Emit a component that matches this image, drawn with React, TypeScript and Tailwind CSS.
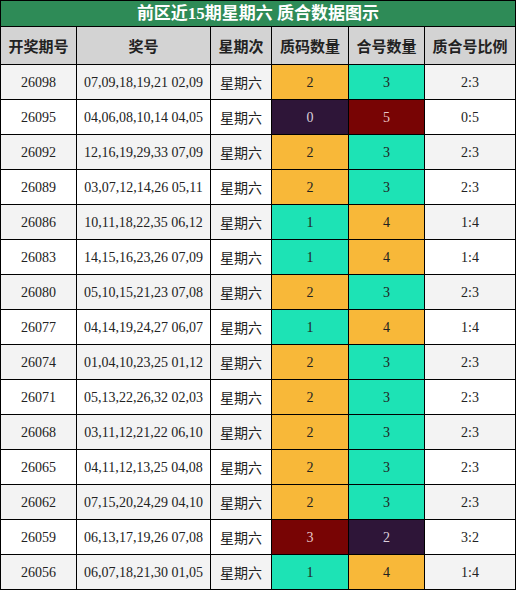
import React from "react";

type Row = { id: string; nums: string; p: number; c: number; ratio: string };

const rows: Row[] = [
  { id: "26098", nums: "07,09,18,19,21 02,09", p: 2, c: 3, ratio: "2:3" },
  { id: "26095", nums: "04,06,08,10,14 04,05", p: 0, c: 5, ratio: "0:5" },
  { id: "26092", nums: "12,16,19,29,33 07,09", p: 2, c: 3, ratio: "2:3" },
  { id: "26089", nums: "03,07,12,14,26 05,11", p: 2, c: 3, ratio: "2:3" },
  { id: "26086", nums: "10,11,18,22,35 06,12", p: 1, c: 4, ratio: "1:4" },
  { id: "26083", nums: "14,15,16,23,26 07,09", p: 1, c: 4, ratio: "1:4" },
  { id: "26080", nums: "05,10,15,21,23 07,08", p: 2, c: 3, ratio: "2:3" },
  { id: "26077", nums: "04,14,19,24,27 06,07", p: 1, c: 4, ratio: "1:4" },
  { id: "26074", nums: "01,04,10,23,25 01,12", p: 2, c: 3, ratio: "2:3" },
  { id: "26071", nums: "05,13,22,26,32 02,03", p: 2, c: 3, ratio: "2:3" },
  { id: "26068", nums: "03,11,12,21,22 06,10", p: 2, c: 3, ratio: "2:3" },
  { id: "26065", nums: "04,11,12,13,25 04,08", p: 2, c: 3, ratio: "2:3" },
  { id: "26062", nums: "07,15,20,24,29 04,10", p: 2, c: 3, ratio: "2:3" },
  { id: "26059", nums: "06,13,17,19,26 07,08", p: 3, c: 2, ratio: "3:2" },
  { id: "26056", nums: "06,07,18,21,30 01,05", p: 1, c: 4, ratio: "1:4" },
];

const ORANGE = "bg-[#f8b839] text-[#222222]";
const TEAL = "bg-[#1de3b5] text-[#222222]";
const PURPLE = "bg-[#2e1538] text-[#dcd0dc]";
const RED = "bg-[#780404] text-[#e8c8c8]";

const primeCls = (v: number) =>
  v === 2 ? ORANGE : v === 1 ? TEAL : v === 0 ? PURPLE : RED;
const compCls = (v: number) =>
  v === 3 ? TEAL : v === 4 ? ORANGE : v === 5 ? RED : PURPLE;

const headers = ["开奖期号", "奖号", "星期次", "质码数量", "合号数量", "质合号比例"];

export default function App() {
  return (
    <div
      className="w-[516px] h-[590px] bg-black p-px grid gap-px grid-cols-[75px_133px_60px_76px_75px_90px] grid-rows-[25px_37px_repeat(15,34px)] text-[#222222]"
      style={{ fontFamily: '"Liberation Serif", "Noto Sans CJK SC", serif' }}
    >
      <div className="col-span-6 bg-[#2e8b57] text-white font-bold text-[17px] flex items-center justify-center leading-none">
        前区近15期星期六 质合数据图示
      </div>
      {headers.map((h) => (
        <div
          key={h}
          className="bg-[#d3d3d3] font-bold text-[15px] flex items-center justify-center pt-[3px] text-[#222222]"
        >
          {h}
        </div>
      ))}
      {rows.map((r, i) => {
        const bg = i % 2 === 0 ? "bg-[#f3f3f3]" : "bg-white";
        return (
          <React.Fragment key={r.id}>
            <div className={`${bg} text-[14px] flex items-center justify-center`}>{r.id}</div>
            <div className={`${bg} text-[14px] flex items-center justify-center whitespace-nowrap`}>{r.nums}</div>
            <div className={`${bg} text-[14px] flex items-center justify-center pt-[3px]`}>星期六</div>
            <div className={`${primeCls(r.p)} text-[14px] flex items-center justify-center`}>{r.p}</div>
            <div className={`${compCls(r.c)} text-[14px] flex items-center justify-center`}>{r.c}</div>
            <div className={`${bg} text-[14px] flex items-center justify-center`}>{r.ratio}</div>
          </React.Fragment>
        );
      })}
    </div>
  );
}
